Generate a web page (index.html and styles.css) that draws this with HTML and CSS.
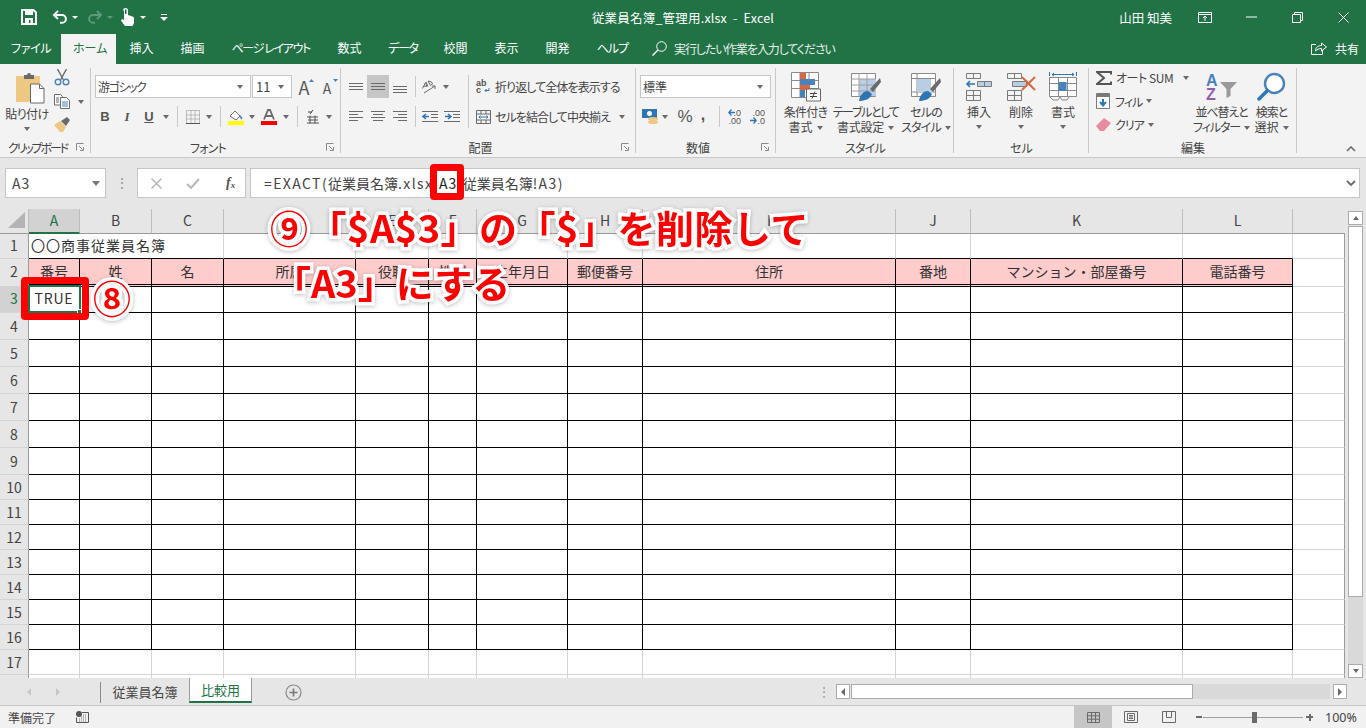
FILE: index.html
```html
<!DOCTYPE html>
<html lang="ja">
<head>
<meta charset="utf-8">
<title>従業員名簿_管理用.xlsx - Excel</title>
<link rel="stylesheet" href="styles.css">
</head>
<body>
<div class="app">

<header class="titlebar">
  <div class="qat">
    <svg class="q-save" width="16" height="16" viewBox="0 0 16 16"><path d="M1 1h11.5L15 3.5V15H1z" fill="none" stroke="#fff" stroke-width="2"/><path d="M4 1h8v5H4zM4 9h8v6H9.500v-4H8v4H4z" fill="#fff"/></svg>
    <svg class="q-undo" width="16" height="14" viewBox="0 0 16 14"><path d="M6 1L2 5l4 4M2 5h8a3.800 3.800 0 0 1 0 7.800H8" fill="none" stroke="#fff" stroke-width="2"/></svg>
    <i class="caret white q-c1"></i>
    <svg class="q-redo" width="16" height="14" viewBox="0 0 16 14"><path d="M10 1l4 4-4 4M14 5H6a3.800 3.800 0 0 0 0 7.800h2" fill="none" stroke="#5b9a7a" stroke-width="2"/></svg>
    <i class="caret dim q-c2"></i>
    <svg class="q-touch" width="14" height="18" viewBox="0 0 14 18"><path d="M3 2.500a2.500 2.500 0 0 1 5 0V7l4.500 1.500c1 .4 1.500 1 1.500 2V15l-1.500 3H5L1 12.500l1-1.500 2 1V2.500z" fill="#fff"/><path d="M5 1.500h1.500V6H5z" fill="#217346"/></svg>
    <i class="caret white q-c3"></i>
    <svg class="q-more" width="8" height="7" viewBox="0 0 8 7"><path d="M1 .5h6" stroke="#fff"/><path d="M0 3h8L4 7z" fill="#fff"/></svg>
  </div>
  <div class="doc-title">従業員名簿_管理用.xlsx&nbsp; - &nbsp;Excel</div>
  <div class="win">
    <span class="user">山田 知美</span>
    <span class="win-btn"><svg width="14" height="11" viewBox="0 0 14 11"><path d="M.5.500h13v10H.500zM.5 2.500h13M7 9V4.500M5 6l2-2 2 2" fill="none" stroke="#fff"/></svg></span>
    <span class="win-btn"><svg width="11" height="2" viewBox="0 0 11 2"><path d="M0 1h11" stroke="#fff"/></svg></span>
    <span class="win-btn"><svg width="11" height="11" viewBox="0 0 11 11"><path d="M.5 2.500h8v8h-8zM2.500 2.500v-2h8v8h-2" fill="none" stroke="#fff"/></svg></span>
    <span class="win-btn"><svg width="11" height="11" viewBox="0 0 11 11"><path d="M.5.500l10 10M10.500.500l-10 10" stroke="#fff"/></svg></span>
  </div>
</header>

<nav class="tabs">
  <span class="tab t-file">ファイル</span>
  <span class="tab t-home">ホーム</span>
  <span class="tab">挿入</span>
  <span class="tab">描画</span>
  <span class="tab t-page">ページ レイアウト</span>
  <span class="tab">数式</span>
  <span class="tab t-data">データ</span>
  <span class="tab">校閲</span>
  <span class="tab">表示</span>
  <span class="tab">開発</span>
  <span class="tab t-help">ヘルプ</span>
  <span class="tell">
    <svg width="15" height="15" viewBox="0 0 15 15"><circle cx="9.500" cy="5.500" r="4.800" fill="none" stroke="#fff"/><path d="M6 9L.5 14.500" stroke="#fff" stroke-width="1.400"/></svg>
    <span class="tell-text">実行したい作業を入力してください</span>
  </span>
  <span class="share">
    <svg width="16" height="14" viewBox="0 0 16 14"><path d="M5 3.500H.5v10h11V9" fill="none" stroke="#fff"/><path d="M4.500 10c0-4 3-5.500 6-5.500V2L15.500 6l-5 4V7.500c-2.500 0-4.500 1-6 2.500z" fill="none" stroke="#fff"/></svg>
    <span>共有</span>
  </span>
</nav>

<section class="ribbon">

  <div class="grp g-clip">
    <div class="body clip-body">
      <div class="big paste">
        <svg width="30" height="32" viewBox="0 0 30 32"><rect x="1" y="4" width="24" height="26" rx="1" fill="#eec883"/><path d="M9 3h3a2 2 0 0 1 4 0h3v4H9z" fill="#6a6a6a"/><path d="M15.500 12h9l4.500 4.500V31H15.500z" fill="#fff" stroke="#6a6a6a"/><path d="M24.500 12v4.500H29" fill="none" stroke="#6a6a6a"/></svg>
        <span class="lb k1">貼り付け</span>
        <i class="caret"></i>
      </div>
      <div class="clip-tools">
        <svg width="16" height="17" viewBox="0 0 16 17"><path d="M3.500 0l6 11M12.500 0l-6 11" stroke="#6a6a6a" stroke-width="1.400"/><circle cx="4" cy="13" r="2.800" fill="none" stroke="#4a82bc" stroke-width="1.400"/><circle cx="12" cy="13" r="2.800" fill="none" stroke="#4a82bc" stroke-width="1.400"/></svg>
        <span class="copy-row"><svg width="16" height="15" viewBox="0 0 16 15"><path d="M.5.500h6l2 2V11H.500z" fill="#fff" stroke="#6a6a6a"/><path d="M6.500 3.500h6l3 3v8h-9z" fill="#fff" stroke="#6a6a6a"/><path d="M8 8h6M8 10h6M8 12h6" stroke="#4a82bc"/><path d="M2 4h3M2 6h3M2 8h3" stroke="#6a6a6a"/></svg><i class="caret copy-c"></i></span>
        <svg width="16" height="15" viewBox="0 0 16 15"><path d="M0 8l6-4 6 6-3 5H6z" fill="#eec883"/><path d="M7 4l6-4 3 3-4 6z" fill="#6a6a6a"/></svg>
      </div>
    </div>
    <div class="glabel ls"><span class="k2">クリップボード</span></div>
    <svg class="launch" width="8" height="8" viewBox="0 0 8 8"><path d="M.5 7.500v-7h7" fill="none" stroke="#8a8a8a"/><path d="M3 3l3.500 3.500M7.500 4v3.500H4" fill="none" stroke="#8a8a8a"/></svg>
  </div>

  <div class="grp g-font">
    <div class="body rows">
      <div class="row r1">
        <span class="select font-sel"><span class="k3">游ゴシック</span><i class="caret"></i></span>
        <span class="select size-sel"><span>11</span><i class="caret"></i></span>
        <span class="tool w22 grow"><b class="aa">A</b><svg class="tip" width="5" height="3" viewBox="0 0 5 3"><path d="M0 3l2.500-3L5 3z" fill="#4a82bc"/></svg></span>
        <span class="tool w22 shrink"><b class="aa small">A</b><svg class="tip" width="5" height="3" viewBox="0 0 5 3"><path d="M0 0l2.500 3L5 0z" fill="#4a82bc"/></svg></span>
      </div>
      <div class="row">
        <span class="tool w22 fb">B</span>
        <span class="tool w22 fi">I</span>
        <span class="tool w22 fu">U</span>
        <span class="dd"><i class="caret"></i></span>
        <i class="vsep"></i>
        <span class="tool w20"><svg width="14" height="14" viewBox="0 0 14 14"><path d="M.5.500h13v13H.500zM5 .5v13M9 .5v13M.5 5h13M.5 9h13" fill="none" stroke="#8a8a8a" stroke-dasharray="1 1"/><path d="M0 13.500h14" stroke="#555"/></svg></span>
        <span class="dd"><i class="caret"></i></span>
        <i class="vsep"></i>
        <span class="tool w20"><svg width="16" height="16" viewBox="0 0 16 16"><path d="M2 7l5-5 5 5-4 4z" fill="#fff" stroke="#6a6a6a"/><path d="M12 6c2 2 3 3 2 4s-2 0-2-4z" fill="#4a82bc"/><rect y="12" width="16" height="4" fill="#ff0"/></svg></span>
        <span class="dd"><i class="caret"></i></span>
        <span class="tool w22"><svg width="16" height="16" viewBox="0 0 16 16"><path d="M3 10.500L7 1h2l4 9.500M5 7h6" fill="none" stroke="#6a6a6a" stroke-width="1.800"/><rect y="12" width="16" height="4" fill="#f00"/></svg></span>
        <span class="dd"><i class="caret"></i></span>
        <i class="vsep"></i>
        <span class="tool w20"><svg width="14" height="15" viewBox="0 0 14 15"><path d="M2 3h4M7 1L4 5" stroke="#444"/><path d="M1 8h11M2 11h10M1 14h12M4 6.500v8M9 6.500v8" stroke="#555"/></svg></span>
        <span class="dd"><i class="caret"></i></span>
      </div>
    </div>
    <div class="glabel ls"><span class="k4">フォント</span></div>
    <svg class="launch" width="8" height="8" viewBox="0 0 8 8"><path d="M.5 7.500v-7h7" fill="none" stroke="#8a8a8a"/><path d="M3 3l3.500 3.500M7.500 4v3.500H4" fill="none" stroke="#8a8a8a"/></svg>
  </div>

  <div class="grp g-align">
    <div class="body align-body">
      <div class="rows align-left">
        <div class="row r1">
          <span class="tool w22"><svg width="14" height="8" viewBox="0 0 14 8"><path d="M0 .5h14M0 3.500h14M0 6.500h14" stroke="#6a6a6a"/></svg></span>
          <span class="tool w22 on"><svg width="14" height="8" viewBox="0 0 14 8"><path d="M0 .5h14M0 3.500h14M0 6.500h14" stroke="#6a6a6a"/></svg></span>
          <span class="tool w22 low"><svg width="14" height="8" viewBox="0 0 14 8"><path d="M0 .5h14M0 3.500h14M0 6.500h14" stroke="#6a6a6a"/></svg></span>
          <i class="vsep"></i>
          <span class="tool w20"><svg width="18" height="16" viewBox="0 0 18 16"><path d="M1.500 9.500l3-6 1.500 4.500M2.500 7.500l3-.5M7 7.500l-2-4.500M7 2l2.500 4.500 2-1.500-1-2zM3 14l11-7M14 7h-3M14 7v3" fill="none" stroke="#6a6a6a"/></svg></span>
          <span class="dd"><i class="caret"></i></span>
        </div>
        <div class="row">
          <span class="tool w22"><svg width="14" height="11" viewBox="0 0 14 11"><path d="M0 .5h14M0 3.500h9M0 6.500h14M0 9.500h9" stroke="#6a6a6a"/></svg></span>
          <span class="tool w22"><svg width="14" height="11" viewBox="0 0 14 11"><path d="M0 .5h14M2 3.500h10M0 6.500h14M2 9.500h10" stroke="#6a6a6a"/></svg></span>
          <span class="tool w22"><svg width="14" height="11" viewBox="0 0 14 11"><path d="M0 .5h14M5 3.500h9M0 6.500h14M5 9.500h9" stroke="#6a6a6a"/></svg></span>
          <i class="vsep"></i>
          <span class="tool w20"><svg width="16" height="11" viewBox="0 0 16 11"><path d="M4 3L1 5.500 4 8M1 5.500h6" fill="none" stroke="#2e75b6" stroke-width="1.500"/><path d="M0 .5h16M9 3.500h7M9 6.500h7M0 10.500h16" stroke="#6a6a6a"/></svg></span>
          <span class="gap2"></span>
          <span class="tool w20"><svg width="16" height="11" viewBox="0 0 16 11"><path d="M4 3l3 2.500L4 8M7 5.500H1" fill="none" stroke="#2e75b6" stroke-width="1.500"/><path d="M0 .5h16M9 3.500h7M9 6.500h7M0 10.500h16" stroke="#6a6a6a"/></svg></span>
        </div>
      </div>
      <i class="vsep tall"></i>
      <div class="rows align-right">
        <div class="row r1">
          <svg class="mini" width="16" height="18" viewBox="0 0 16 18"><text x="0" y="8" class="abc">ab</text><text x="0" y="15" class="abc">c</text><path d="M13 10v2.500H9M10.500 11L9 12.500 10.500 14" fill="none" stroke="#2e75b6"/></svg>
          <span class="txt k5">折り返して全体を表示する</span>
        </div>
        <div class="row">
          <svg class="mini" width="16" height="14" viewBox="0 0 16 14"><path d="M.5.500h14v13H.500zM.5 4h14M.5 10h14M5 .5V4M10 .5V4M5 10v3.500M10 10v3.500" fill="none" stroke="#6a6a6a"/><path d="M3 7h9" stroke="#2e75b6"/><path d="M4.500 5.500L3 7l1.500 1.500M10.500 5.500L12 7l-1.500 1.500" fill="none" stroke="#2e75b6"/></svg>
          <span class="txt k6">セルを結合して中央揃え</span>
          <i class="caret merge-c"></i>
        </div>
      </div>
    </div>
    <div class="glabel ls"><span>配置</span></div>
    <svg class="launch" width="8" height="8" viewBox="0 0 8 8"><path d="M.5 7.500v-7h7" fill="none" stroke="#8a8a8a"/><path d="M3 3l3.500 3.500M7.500 4v3.500H4" fill="none" stroke="#8a8a8a"/></svg>
  </div>

  <div class="grp g-num">
    <div class="body rows">
      <div class="row r1">
        <span class="select num-sel"><span>標準</span><i class="caret"></i></span>
      </div>
      <div class="row">
        <span class="tool w20 n-cur"><svg width="17" height="16" viewBox="0 0 17 16"><rect x="0" y="0" width="15" height="9" fill="#2e75b6"/><circle cx="7.500" cy="4.500" r="2.500" fill="#fff"/><ellipse cx="11" cy="10" rx="5" ry="2" fill="#eec883"/><ellipse cx="11" cy="13" rx="5" ry="2" fill="#eec883"/></svg></span>
        <span class="dd w10"><i class="caret"></i></span>
        <span class="tool w20 n-pct">%</span>
        <span class="tool w20 n-com">,</span>
        <i class="vsep s6"></i>
        <span class="tool w20 dec"><svg class="ar-up" width="7" height="7" viewBox="0 0 7 7"><path d="M3.500.5L.8 3.500l2.700 3M1 3.500h6" fill="none" stroke="#2e75b6" stroke-width="1.300"/></svg><span class="dz">.0<br>.00</span></span>
        <span class="gap4"></span>
        <span class="tool w20 dec"><svg class="ar-low" width="7" height="7" viewBox="0 0 7 7"><path d="M3.500.5l2.700 3-2.700 3M0 3.500h6" fill="none" stroke="#2e75b6" stroke-width="1.300"/></svg><span class="dz">.00<br>.0</span></span>
      </div>
    </div>
    <div class="glabel ls"><span>数値</span></div>
    <svg class="launch" width="8" height="8" viewBox="0 0 8 8"><path d="M.5 7.500v-7h7" fill="none" stroke="#8a8a8a"/><path d="M3 3l3.500 3.500M7.500 4v3.500H4" fill="none" stroke="#8a8a8a"/></svg>
  </div>

  <div class="grp g-style">
    <div class="body bigs">
      <div class="big b49">
        <svg width="30" height="30" viewBox="0 0 30 30"><path d="M.5.500h27v25H.500zM.5 8.500h27M.5 16.500h27M9 .5v25M18 .5v25" fill="#fff" stroke="#8a8a8a"/><rect x="9" y="1" width="6" height="7" fill="#d9673f"/><rect x="9" y="7" width="15" height="6" fill="#4a82bc"/><rect x="9" y="13" width="10" height="5" fill="#d9673f"/><rect x="9" y="18" width="5" height="7" fill="#4a82bc"/><path d="M15.500 17h14v12h-14z" fill="#fff" stroke="#6a6a6a"/><path d="M19 21.500h7M19 24.500h7M24 19.500l-3 7" stroke="#444"/></svg>
        <span class="lb k7">条件付き</span>
        <span class="lb">書式<i class="caret in"></i></span>
      </div>
      <div class="big b68">
        <svg width="30" height="30" viewBox="0 0 30 30"><path d="M.5 1.500h24v23H.500z" fill="#fff" stroke="#8a8a8a"/><path d="M8 7h17v17H8z" fill="#b9cde5"/><path d="M.5 7h24M.5 13h24M.5 19h24M8 1.500v23M16 1.500v23" stroke="#a0a0a0" fill="none"/><path d="M29 6L19 17l3 3L30 10z" fill="#6a6a6a"/><path d="M8 29c1-7 5-10 9-10l4 3c-2 5-7 7-13 7z" fill="#2e75b6"/></svg>
        <span class="lb k8">テーブルとして</span>
        <span class="lb k13">書式設定<i class="caret in"></i></span>
      </div>
      <div class="big b54">
        <svg width="30" height="30" viewBox="0 0 30 30"><path d="M.5 1.500h24v23H.500zM.5 6.500h24M.5 20h24M6 1.500v23" fill="#fff" stroke="#8a8a8a"/><rect x="6" y="7" width="14" height="13" fill="#b9cde5"/><path d="M29 6L19 17l3 3L30 10z" fill="#6a6a6a"/><path d="M8 29c1-7 5-10 9-10l4 3c-2 5-7 7-13 7z" fill="#2e75b6"/></svg>
        <span class="lb k9">セルの</span>
        <span class="lb k9">スタイル<i class="caret in"></i></span>
      </div>
    </div>
    <div class="glabel"><span class="k4">スタイル</span></div>
  </div>

  <div class="grp g-cells">
    <div class="body bigs">
      <div class="big b42">
        <svg width="28" height="30" viewBox="0 0 28 30"><path d="M1.500 1.500h14v5h-14zM8.500 1.500v5M1.500 18.500h14v10h-14zM1.500 23.500h14M8.500 18.500v10" fill="none" stroke="#7a7a7a"/><path d="M12.500 9.500h14v5h-14z" fill="#b9cde5" stroke="#7a7a7a"/><path d="M19.500 9.500v5" stroke="#7a7a7a"/><path d="M5 9l-3 3 3 3M2 12h8" fill="none" stroke="#2e75b6" stroke-width="1.600"/></svg>
        <span class="lb">挿入</span>
        <i class="caret"></i>
      </div>
      <div class="big b42">
        <svg width="30" height="30" viewBox="0 0 30 30"><path d="M1.500 1.500h14v5h-14zM8.500 1.500v5M1.500 18.500h14v10h-14zM1.500 23.500h14M8.500 18.500v10" fill="none" stroke="#7a7a7a"/><path d="M6.500 9.500h14v5h-14z" fill="#b9cde5" stroke="#7a7a7a"/><path d="M16 5l13 13M29 5L16 18" stroke="#d9673f" stroke-width="2"/></svg>
        <span class="lb">削除</span>
        <i class="caret"></i>
      </div>
      <div class="big b42">
        <svg width="28" height="30" viewBox="0 0 28 30"><path d="M.5 0v4M27.500 0v4" stroke="#2e75b6"/><path d="M3 2.500h22M5 1L3 2.500 5 4M23 1l2 1.500L23 4" fill="none" stroke="#2e75b6"/><path d="M.5 5.500h27v19H.500zM9.500 5.500v19M18.500 5.500v19M.5 11.500h27M.5 18.500h27" fill="#fff" stroke="#8a8a8a"/><rect x="9.500" y="10" width="8" height="9" fill="#4a82bc"/><path d="M1 25l3 3h5l2-3M11 25l2 3h5l2-3" fill="none" stroke="#8a8a8a"/></svg>
        <span class="lb">書式</span>
        <i class="caret"></i>
      </div>
    </div>
    <div class="glabel"><span>セル</span></div>
  </div>

  <div class="grp g-edit">
    <div class="body edit-body">
      <div class="edit-col">
        <div class="e-row"><svg width="16" height="14" viewBox="0 0 16 14"><path d="M15 3.500V1H1l7 6-7 6h14v-2.500" fill="none" stroke="#555" stroke-width="2"/></svg><span class="txt k10">オート SUM</span><i class="caret c-sum"></i></div>
        <div class="e-row"><svg width="15" height="16" viewBox="0 0 15 16"><path d="M.5.500h13v15H.500z" fill="#fff" stroke="#7a7a7a"/><rect x="1" y="1" width="12" height="3" fill="#7a7a7a"/><path d="M7 6v6M4 9l3 3.500L10 9" fill="none" stroke="#2e75b6" stroke-width="2"/></svg><span class="txt k11">フィル</span><i class="caret c-mini"></i></div>
        <div class="e-row"><svg width="15" height="13" viewBox="0 0 15 13"><path d="M0 8l8-8 7 5-7 8H4z" fill="#ea8aa0"/></svg><span class="txt k11">クリア</span><i class="caret c-mini"></i></div>
      </div>
      <div class="big b51 sort">
        <svg width="31" height="34" viewBox="0 -2 31 34"><text x="0" y="14" class="sa">A</text><text x="0" y="28" class="sz">Z</text><path d="M14 10h17l-6.500 7v7l-4 2v-9z" fill="#9a9a9a"/></svg>
        <span class="lb k12">並べ替えと</span>
        <span class="lb k12">フィルター<i class="caret in"></i></span>
      </div>
      <div class="big b49b">
        <svg width="29" height="30" viewBox="0 0 29 30"><circle cx="17.500" cy="11.500" r="9.500" fill="#fff" stroke="#4a82bc" stroke-width="2.400"/><path d="M10 19L2 27" stroke="#2e75b6" stroke-width="3.500" stroke-linecap="round"/></svg>
        <span class="lb k12">検索と</span>
        <span class="lb">選択<i class="caret in"></i></span>
      </div>
    </div>
    <div class="glabel"><span>編集</span></div>
  </div>

  <svg class="collapse" width="10" height="6" viewBox="0 0 10 6"><path d="M1 5l4-4 4 4" fill="none" stroke="#6a6a6a" stroke-width="1.600"/></svg>
</section>

<section class="fbar">
  <div class="namebox"><span>A3</span><i class="caret wide"></i></div>
  <span class="grip">⋮</span>
  <div class="fbtns">
    <svg width="11" height="11" viewBox="0 0 11 11"><path d="M.5.500l10 10M10.500.500l-10 10" stroke="#b8b8b8" stroke-width="1.500"/></svg>
    <svg width="14" height="11" viewBox="0 0 14 11"><path d="M1 6l4 4 8-9" fill="none" stroke="#b8b8b8" stroke-width="2"/></svg>
    <span class="fx">f<sub>x</sub></span>
  </div>
  <div class="finput">
    <span class="ftext"><span class="lat">=EXACT(</span>従業員名簿<span class="lat">.xlsx!</span><span class="ref">A3</span><span class="lat">,</span>従業員名簿<span class="lat">!A3)</span></span>
    <svg width="10" height="6" viewBox="0 0 10 6"><path d="M1 1l4 4 4-4" fill="none" stroke="#6a6a6a" stroke-width="1.800"/></svg>
  </div>
</section>

<section class="work">
  <div class="sheet">
    <table class="grid">
      <colgroup><col class="c0"><col class="ca"><col class="cb"><col class="cc"><col class="cd"><col class="ce"><col class="cf"><col class="cg"><col class="ch"><col class="ci"><col class="cj"><col class="ck"><col class="cl"><col class="cz"></colgroup>
      <thead>
        <tr><th class="corner"><svg width="17" height="16" viewBox="0 0 17 16"><path d="M17 0v16H0z" fill="#b4b4b4"/></svg></th><th class="cur">A</th><th>B</th><th>C</th><th>D</th><th>E</th><th>F</th><th>G</th><th>H</th><th>I</th><th>J</th><th>K</th><th>L</th><th class="end"></th></tr>
      </thead>
      <tbody>
        <tr class="h25 top"><th>1</th><td colspan="3" class="title">〇〇商事従業員名簿</td><td></td><td></td><td></td><td></td><td></td><td></td><td></td><td></td><td></td><td></td></tr>
        <tr class="hdr k"><th>2</th><td>番号</td><td>姓</td><td>名</td><td>所属</td><td>役職</td><td>性別</td><td>生年月日</td><td>郵便番号</td><td>住所</td><td>番地</td><td>マンション・部屋番号</td><td>電話番号</td><td></td></tr>
        <tr class="h26 k"><th class="cur">3</th><td class="true">TRUE</td><td></td><td></td><td></td><td></td><td></td><td></td><td></td><td></td><td></td><td></td><td></td><td></td></tr>
        <tr class="h27 k"><th>4</th><td></td><td></td><td></td><td></td><td></td><td></td><td></td><td></td><td></td><td></td><td></td><td></td><td></td></tr>
        <tr class="h27 k"><th>5</th><td></td><td></td><td></td><td></td><td></td><td></td><td></td><td></td><td></td><td></td><td></td><td></td><td></td></tr>
        <tr class="h27 k"><th>6</th><td></td><td></td><td></td><td></td><td></td><td></td><td></td><td></td><td></td><td></td><td></td><td></td><td></td></tr>
        <tr class="h27 k"><th>7</th><td></td><td></td><td></td><td></td><td></td><td></td><td></td><td></td><td></td><td></td><td></td><td></td><td></td></tr>
        <tr class="h27 k"><th>8</th><td></td><td></td><td></td><td></td><td></td><td></td><td></td><td></td><td></td><td></td><td></td><td></td><td></td></tr>
        <tr class="h27 k"><th>9</th><td></td><td></td><td></td><td></td><td></td><td></td><td></td><td></td><td></td><td></td><td></td><td></td><td></td></tr>
        <tr class="h25 k"><th>10</th><td></td><td></td><td></td><td></td><td></td><td></td><td></td><td></td><td></td><td></td><td></td><td></td><td></td></tr>
        <tr class="h25 k"><th>11</th><td></td><td></td><td></td><td></td><td></td><td></td><td></td><td></td><td></td><td></td><td></td><td></td><td></td></tr>
        <tr class="h25 k"><th>12</th><td></td><td></td><td></td><td></td><td></td><td></td><td></td><td></td><td></td><td></td><td></td><td></td><td></td></tr>
        <tr class="h25 k"><th>13</th><td></td><td></td><td></td><td></td><td></td><td></td><td></td><td></td><td></td><td></td><td></td><td></td><td></td></tr>
        <tr class="h25 k"><th>14</th><td></td><td></td><td></td><td></td><td></td><td></td><td></td><td></td><td></td><td></td><td></td><td></td><td></td></tr>
        <tr class="h25 k"><th>15</th><td></td><td></td><td></td><td></td><td></td><td></td><td></td><td></td><td></td><td></td><td></td><td></td><td></td></tr>
        <tr class="h25 k"><th>16</th><td></td><td></td><td></td><td></td><td></td><td></td><td></td><td></td><td></td><td></td><td></td><td></td><td></td></tr>
        <tr class="h25"><th>17</th><td></td><td></td><td></td><td></td><td></td><td></td><td></td><td></td><td></td><td></td><td></td><td></td><td></td></tr>
        <tr class="h25"><th></th><td></td><td></td><td></td><td></td><td></td><td></td><td></td><td></td><td></td><td></td><td></td><td></td><td></td></tr>
      </tbody>
    </table>
  </div>
  <div class="vscroll">
    <span class="sbtn"><i class="caret up"></i></span>
    <span class="vthumb"></span>
    <span class="vtrack"></span>
    <span class="sbtn"><i class="caret"></i></span>
  </div>
</section>

<section class="sheetbar">
  <div class="sheet-left">
    <i class="nav navl"></i>
    <i class="nav navr"></i>
    <i class="tsep"></i>
    <span class="stab">従業員名簿</span>
    <span class="stab active">比較用</span>
    <svg class="addsheet" width="17" height="17" viewBox="0 0 17 17"><circle cx="8.500" cy="8.500" r="7.500" fill="none" stroke="#8a8a8a" stroke-width="1.200"/><path d="M8.500 4.500v8M4.500 8.500h8" stroke="#7a7a7a" stroke-width="1.600"/></svg>
  </div>
  <span class="hgrip">⋮</span>
  <div class="hscroll">
    <span class="sbtn h"><i class="nav2 l"></i></span>
    <span class="hthumb"></span>
    <span class="htrack"></span>
    <span class="sbtn h"><i class="nav2 r"></i></span>
  </div>
</section>

<footer class="status">
  <span class="ready">準備完了</span>
  <svg class="macro" width="13" height="12" viewBox="0 0 13 12"><circle cx="3" cy="3" r="3" fill="#555"/><path d="M6 1.500h6.500V11.500H.5V6.500" fill="none" stroke="#555"/><path d="M3 8h8M3 10h8M5 4h6M5 6h6" stroke="#777" stroke-dasharray="1 1"/></svg>
  <div class="views">
    <span class="view on"><svg width="13" height="11" viewBox="0 0 13 11"><path d="M.5.500h12v10H.500zM4.500.5v10M8.500.5v10M.5 3.800h12M.5 7.200h12" fill="none" stroke="#6a6a6a"/></svg></span>
    <span class="view"><svg width="14" height="12" viewBox="0 0 14 12"><path d="M.5.500h13v11H.500z" fill="none" stroke="#6a6a6a"/><path d="M3.500 2.500h7v7h-7zM5 4.500h4M5 6h4M5 7.500h4" fill="none" stroke="#6a6a6a"/></svg></span>
    <span class="view"><svg width="14" height="12" viewBox="0 0 14 12"><path d="M.5.500h13v11H.500zM4.500.5v6h5v-6" fill="none" stroke="#6a6a6a"/></svg></span>
    <i class="zm minus"></i>
    <span class="slider"><i class="knob"></i></span>
    <i class="zm plus"></i>
    <span class="pct">100%</span>
  </div>
</footer>

<div class="mark sel-cell"><i class="handle"></i></div>
<div class="mark red r-cell"></div>
<div class="mark red r-ref"></div>
<div class="note n1">⑨「$A$3」の「$」を削除して</div>
<div class="note n2">「A3」にする</div>
<div class="note n3">⑧</div>

</div>
</body>
</html>
```

FILE: styles.css
```css
* { box-sizing: border-box; }
html, body { margin: 0; padding: 0; }
body { font-family: "Noto Sans CJK JP", "Noto Sans", sans-serif; font-size: 12px; color: #444; background: #e6e6e6; }
i { display: block; font-style: normal; }
svg { display: block; flex: none; }
.app { position: relative; width: 1366px; height: 728px; overflow: hidden; display: flex; flex-direction: column; font-feature-settings: "palt"; }

.caret { width: 0; height: 0; flex: none; border-left: 3.500px solid transparent; border-right: 3.500px solid transparent; border-top: 4px solid #6a6a6a; }
.caret.in { display: inline-block; margin-left: 4px; vertical-align: 2px; }
.caret.white { border-top-color: #fff; border-left-width: 3px; border-right-width: 3px; border-top-width: 3px; }
.caret.dim { border-top-color: #5b9a7a; border-left-width: 3px; border-right-width: 3px; border-top-width: 3px; }
.caret.up { border-top: 0; border-bottom: 4px solid #6a6a6a; }

/* title bar */
.titlebar { flex: none; height: 34px; background: #217346; color: #fff; display: grid; grid-template-columns: 1fr auto 1fr; align-items: center; }
.qat { display: flex; align-items: center; padding-left: 21px; }
.q-undo { margin-left: 15px; }
.q-c1 { margin-left: 4px; }
.q-redo { margin-left: 9px; }
.q-c2 { margin-left: 4px; }
.q-touch { margin-left: 7px; }
.q-c3 { margin-left: 6px; }
.q-more { margin-left: 14px; }
.doc-title { font-size: 12.500px; letter-spacing: .2px; color: #fff; }
.win { display: flex; align-items: center; justify-content: flex-end; }
.user { margin-right: 10px; font-size: 12.500px; }
.win-btn { width: 46px; height: 30px; display: flex; align-items: center; justify-content: center; }

/* tabs */
.tabs { flex: none; height: 30px; background: #217346; color: #fff; display: flex; align-items: center; }
.tab { height: 30px; line-height: 28px; padding: 0 13.500px; font-size: 12px; white-space: nowrap; }
.t-file { padding: 0 15px 0 11px; width: 61px; letter-spacing: -.3px; }
.t-home { width: 55px; background: #f3f3f3; color: #217346; padding: 0 12px; text-align: center; }
.t-page { width: 106px; letter-spacing: -1.35px; padding: 0 0 0 13.500px; }
.t-data { width: 55px; padding: 0 13px; letter-spacing: -1.3px; }
.t-help { width: 57px; letter-spacing: -1px; }
.tell { display: flex; align-items: center; gap: 7px; margin-left: 12px; padding-bottom: 2px; }
.tell-text { color: #e5efe9; font-size: 12px; letter-spacing: -1.15px; white-space: nowrap; }
.share { margin-left: auto; margin-right: 7px; display: flex; align-items: center; gap: 8px; padding-bottom: 2px; }

/* ribbon */
.ribbon { flex: none; position: relative; height: 94px; background: #f3f3f3; border-bottom: 1px solid #c9c9c9; display: flex; }
.grp { position: relative; height: 93px; display: flex; flex-direction: column; }
.grp::after { content: ""; position: absolute; right: 0; top: 4px; bottom: 4px; width: 1px; background: #c9c9c9; }
.g-clip { width: 91px; }
.g-font { width: 250px; }
.g-align { width: 295px; }
.g-num { width: 140px; }
.g-style { width: 178px; }
.g-cells { width: 135px; }
.g-edit { width: 208px; }
.body { flex: none; height: 76px; }
.glabel { flex: 1; text-align: center; line-height: 16px; color: #444; white-space: nowrap; }
.glabel.ls { padding-right: 16px; }
.launch { position: absolute; right: 7px; bottom: 6px; }
.collapse { position: absolute; right: 10px; bottom: 5px; }
.rows { padding: 11px 0 0 0; }
.row { display: flex; align-items: center; height: 23px; }
.row.r1 { margin-bottom: 7px; }
.g-font .rows { padding-left: 3px; }
.g-num .rows { padding-left: 4px; }
.tool { flex: none; height: 23px; display: flex; align-items: center; justify-content: center; position: relative; color: #555; }
.w20 { width: 20px; }
.w22 { width: 22px; }
.on { background: #c6c6c6; }
.low svg { margin-top: 6px; }
.dd { flex: none; width: 12px; display: flex; justify-content: center; }
.dd.w10 { width: 10px; margin-right: 3px; }
.vsep { flex: none; width: 1px; height: 21px; background: #c9c9c9; margin: 0 5px; }
.vsep.s6 { margin: 0 3px 0 6px; }
.vsep.tall { height: 53px; margin: 11px 4px 0 4px; }
.gap2 { width: 2px; flex: none; }
.gap4 { width: 4px; flex: none; }
.txt { white-space: nowrap; }

.select { flex: none; height: 23px; background: #fff; border: 1px solid #c6c6c6; display: flex; align-items: center; justify-content: space-between; padding: 0 7px 0 2px; color: #444; }
.font-sel { width: 156px; margin-left: 1px; }
.size-sel { width: 40px; margin-left: 1px; padding-left: 3px; font-size: 13px; }
.num-sel { width: 131px; }
.k3 { letter-spacing: -1.4px; }
.grow { margin-left: 1px; width: 22px; }
.shrink { width: 24px; }
.aa { font-weight: 400; font-size: 18px; color: #555; line-height: 1; }
.aa.small { font-size: 14px; margin-top: 2px; }
.tip { position: absolute; right: 1px; top: 4px; }
.fb { font-weight: 700; font-size: 13px; font-family: "Liberation Sans", sans-serif; }
.fi { font-style: italic; font-size: 13px; font-family: "Liberation Serif", serif; font-weight: 700; }
.fu { font-weight: 700; font-size: 13px; text-decoration: underline; font-family: "Liberation Sans", sans-serif; }
.abc { font: 700 9px "Liberation Sans", sans-serif; fill: #555; }

/* clipboard */
.clip-body { display: flex; }
.big { flex: none; display: flex; flex-direction: column; align-items: center; padding-top: 6px; }
.big > svg { height: 34px; padding: 0; }
.lb { display: block; line-height: 15px; white-space: nowrap; color: #444; }
.big > .caret { margin-top: 6px; }
.paste { width: 54px; padding-top: 8px; }
.paste > svg { height: 32px; margin-left: 5px; }
.paste .lb { margin-top: 2px; }
.k1 { letter-spacing: -.5px; }
.k2 { letter-spacing: -2.1px; }
.k4 { letter-spacing: -.8px; }
.k5 { letter-spacing: -.9px; }
.k6 { letter-spacing: -.95px; }
.k7 { letter-spacing: -.7px; }
.k8 { letter-spacing: -1.350px; }
.k9 { letter-spacing: -.8px; }
.k10 { letter-spacing: -.45px; }
.k11 { letter-spacing: -1px; }
.k12 { letter-spacing: -1.100px; }
.k13 { letter-spacing: -.3px; }
.clip-tools { display: flex; flex-direction: column; align-items: flex-start; padding-top: 5px; gap: 8px; }
.copy-row { display: flex; align-items: center; }
.copy-c { margin-left: 8px; }

/* align */
.align-body { display: flex; }
.align-left { width: 123px; padding-left: 4px; }
.align-left .vsep { margin: 0 4px; }
.align-right .row { gap: 3px; }
.mini { margin-left: 3px; }
.merge-c { margin-left: 6px; }

/* numbers */
.n-pct { font-size: 17px; color: #555; font-family: "Liberation Sans", sans-serif; margin-left: 2px; margin-right: -2px; }
.n-com { font-size: 16px; font-weight: 700; color: #555; font-family: "Liberation Sans", sans-serif; margin-top: -4px; }
.dec { font: 9px/8px "Liberation Sans", sans-serif; }
.dz { text-align: right; color: #555; }
.dec .dz { position: absolute; right: 2px; top: 4px; }
.ar-up { position: absolute; left: 5px; top: 4px; }
.ar-low { position: absolute; left: 3px; top: 12px; }

/* big buttons */
.bigs { display: flex; }
.g-style .bigs { padding-left: 5px; }
.g-cells .bigs { padding-left: 4px; }
.b49 { width: 49px; }
.b68 { width: 68px; padding-left: 3px; }
.b54 { width: 54px; padding-left: 2px; }
.b42 { width: 42px; }
.b51 { width: 53px; }
.b49b { width: 47px; }

/* edit */
.edit-body { display: flex; }
.edit-col { width: 106px; padding: 2px 0 0 7px; }
.e-row { height: 23.500px; display: flex; align-items: center; gap: 4px; white-space: nowrap; }
.c-sum { margin-left: 6px; }
.c-mini { margin-left: 0; }
.sort { margin-left: 0; }
.sa { font: 700 16px "Liberation Sans", sans-serif; fill: #4a82bc; }
.sz { font: 700 16px "Liberation Sans", sans-serif; fill: #8e5fb0; }

/* formula bar */
.fbar { flex: none; height: 51px; background: #e6e6e6; display: flex; align-items: flex-start; padding: 10px 6px 0 5px; }
.namebox { width: 101px; height: 30px; background: #fff; border: 1px solid #c6c6c6; display: flex; align-items: center; justify-content: space-between; padding: 0 5px 0 6px; font-size: 14px; letter-spacing: 1px; color: #444; }
.caret.wide { border-left-width: 4.500px; border-right-width: 4.500px; border-top-width: 5px; border-top-color: #777; }
.grip { width: 31px; text-align: center; line-height: 28px; color: #999; font-size: 14px; }
.fbtns { width: 109px; height: 30px; background: #fff; border: 1px solid #c6c6c6; display: flex; align-items: center; padding-left: 13px; gap: 24px; }
.fx { font: italic 700 14px "Liberation Serif", serif; color: #555; margin-left: 2px; }
.fx sub { font-size: 9px; vertical-align: -1px; }
.finput { width: 1110px; height: 30px; margin-left: 4px; background: #fff; border: 1px solid #c6c6c6; display: flex; align-items: center; justify-content: space-between; padding: 0 3px 0 13px; }
.ftext { font-size: 14px; color: #444; font-feature-settings: normal; white-space: nowrap; }
.lat { letter-spacing: 1.4px; }
.ref { color: #222; letter-spacing: 1px; }

/* sheet */
.work { flex: none; height: 470px; display: flex; }
.sheet { flex: none; width: 1345px; height: 470px; overflow: hidden; border-bottom: 1px solid #9a9a9a; background: #fff; }
.grid { table-layout: fixed; width: 1345px; border-collapse: separate; border-spacing: 0; font-size: 14px; color: #333; font-feature-settings: normal; }
.c0 { width: 29px; } .ca { width: 51px; } .cb { width: 72px; } .cc { width: 72px; } .cd { width: 132px; }
.ce { width: 73px; } .cf { width: 48px; } .cg { width: 91px; } .ch { width: 75px; } .ci { width: 253px; }
.cj { width: 75px; } .ck { width: 212px; } .cl { width: 110px; } .cz { width: 52px; }
.grid th, .grid td { padding: 0; line-height: 1; font-weight: 400; text-align: center; overflow: hidden; white-space: nowrap; }
.grid thead th { height: 25px; padding-bottom: 2px; background: #e6e6e6; border-right: 1px solid #bdbdbd; border-bottom: 1px solid #9a9a9a; color: #444; }
.grid thead th.cur { background: #d2d2d2; color: #217346; border-bottom: 2px solid #217346; }
.grid thead th.end { border-right: 0; }
.corner svg { margin: 0 0 0 8px; }
.grid tbody th { background: #e6e6e6; border-right: 1px solid #9a9a9a; border-bottom: 1px solid #d4d4d4; color: #444; }
.grid tbody th.cur { background: #d2d2d2; color: #217346; }
.grid td { background: #fff; border-right: 1px solid #d4d4d4; border-bottom: 1px solid #d4d4d4; }
.grid td:last-child { border-right: 1px solid #9a9a9a; }
.h25 th, .h25 td { height: 25px; }
.h26 th, .h26 td { height: 26px; }
.h27 th, .h27 td { height: 27px; }
.hdr th, .hdr td { height: 28px; }
.grid .top th, .grid .top td { padding-bottom: 3px; }
.grid .h26 th { padding-bottom: 3px; }
.grid .true { padding-bottom: 3px; letter-spacing: .8px; }
.top td { border-bottom-color: #000; }
.top td:last-child { border-bottom-color: #d4d4d4; }
.grid .title { text-align: left; padding-left: 2px; letter-spacing: 1px; }
.k td:not(:last-child) { border-right-color: #000; border-bottom-color: #000; }
.grid .hdr td:not(:last-child) { background: #ffcccc; border-bottom: 3px double #000; color: #333; padding-bottom: 1px; }
.hdr td:last-child { border-bottom: 1px solid #d4d4d4; }
.grid .hdr th { padding-bottom: 3px; }

/* vertical scrollbar */
.vscroll { flex: none; width: 21px; padding: 2px 3px 1px 3px; display: flex; flex-direction: column; gap: 1px; }
.sbtn { flex: none; background: #fff; border: 1px solid #ababab; display: flex; align-items: center; justify-content: center; height: 14px; width: 15px; }
.vthumb { flex: none; height: 371px; background: #fff; border: 1px solid #ababab; }
.vtrack { flex: 1; background: #d9d9d9; margin: -1px 0; }

/* sheet tabs */
.sheetbar { flex: none; height: 28px; background: #e6e6e6; border-bottom: 1px solid #c6c6c6; display: flex; position: relative; z-index: 1; margin-top: -1px; }
.sheet-left { width: 812px; display: flex; align-items: flex-start; height: 27px; position: relative; }
.nav { width: 0; height: 0; position: absolute; top: 10px; border-top: 4px solid transparent; border-bottom: 4px solid transparent; }
.navl { left: 27px; border-right: 4px solid #c6c6c6; }
.navr { left: 56px; border-left: 4px solid #c6c6c6; }
.tsep { width: 1px; height: 21px; background: #8a8a8a; margin: 4px 0 0 100px; }
.stab { width: 88px; height: 27px; line-height: 27px; text-align: center; font-size: 13px; color: #444; font-feature-settings: normal; }
.stab.active { width: 63px; height: 25px; background: #fff; color: #217346; line-height: 24px; border: 1px solid #9a9a9a; border-top: 0; border-bottom: 2px solid #217346; }
.addsheet { margin: 6px 0 0 33px; }
.hgrip { width: 24px; text-align: center; line-height: 26px; color: #999; font-size: 12px; }
.hscroll { width: 511px; height: 15px; margin-top: 6px; display: flex; }
.sbtn.h { height: 15px; width: 14px; }
.hthumb { flex: none; width: 342px; height: 15px; background: #fff; border: 1px solid #ababab; margin-left: 1px; }
.htrack { flex: 1; background: #d9d9d9; margin-right: 3px; }
.nav2 { width: 0; height: 0; border-top: 4px solid transparent; border-bottom: 4px solid transparent; }
.nav2.l { border-right: 4px solid #6a6a6a; }
.nav2.r { border-left: 4px solid #6a6a6a; }

/* status */
.status { flex: 1; background: #f1f1f1; display: flex; align-items: center; padding-left: 8px; }
.ready { font-size: 12px; color: #444; font-feature-settings: normal; width: 68px; }
.views { margin-left: auto; width: 292px; height: 100%; display: flex; align-items: center; }
.view { width: 38px; height: 100%; display: flex; align-items: center; justify-content: center; }
.view.on { background: #c6c6c6; }
.zm { position: relative; width: 6px; height: 2px; background: #6a6a6a; margin-left: 8px; }
.plus { width: 7px; margin-left: 3px; }
.plus::after { content: ""; position: absolute; left: 2.500px; top: -2.500px; width: 2px; height: 7px; background: #6a6a6a; }
.slider { position: relative; width: 100px; height: 1px; background: #a0a0a0; margin-left: 1px; }
.knob { position: absolute; left: 49px; top: -5px; width: 5px; height: 11px; background: #6a6a6a; }
.pct { margin-left: 12px; font-size: 12.500px; color: #444; font-family: "Noto Sans", sans-serif; }

/* overlays */
.mark { position: absolute; }
.sel-cell { left: 28px; top: 285px; width: 53px; height: 28px; border: 2px solid #217346; }
.handle { position: absolute; right: -3px; bottom: -3px; width: 5px; height: 5px; background: #217346; border: 1px solid #fff; }
.red { border: 7px solid #f00; border-radius: 4px; }
.r-cell { left: 21px; top: 277px; width: 68px; height: 43px; }
.r-ref { left: 430px; top: 164px; width: 34px; height: 36px; }
.note { position: absolute; color: #f00; font-weight: 700; font-size: 38px; line-height: 1; white-space: nowrap; -webkit-text-stroke: 7px #fff; paint-order: stroke fill; font-feature-settings: normal; filter: drop-shadow(0 1px 2px rgba(0,0,0,.25)); }
.n1 { left: 270px; top: 208px; letter-spacing: .5px; }
.n2 { left: 273px; top: 263px; }
.n3 { left: 93px; top: 278px; }
```
